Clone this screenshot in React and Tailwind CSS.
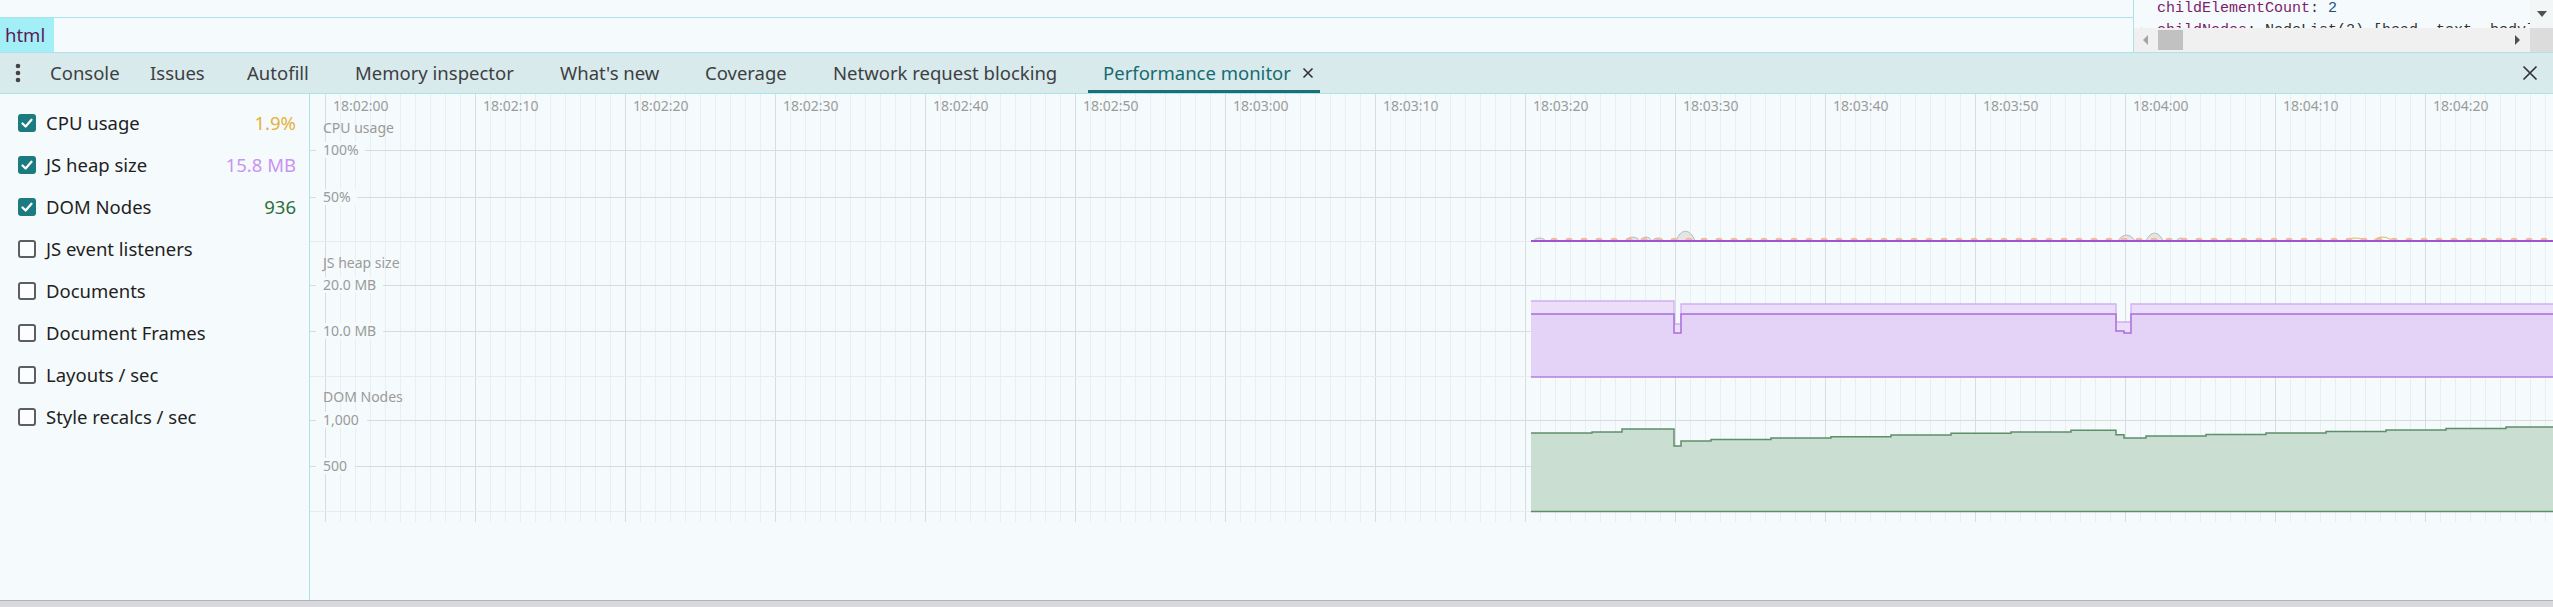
import React from "react";

const END = 2553;
const X = (px) => px - 310;
const Y = (py) => py - 94;

const TABS = [
  { label: "Console", w: "w-[100px]" },
  { label: "Issues", w: "w-[97px]" },
  { label: "Autofill", w: "w-[108px]" },
  { label: "Memory inspector", w: "w-[205px]" },
  { label: "What's new", w: "w-[145px]" },
  { label: "Coverage", w: "w-[128px]" },
  { label: "Network request blocking", w: "w-[270px]" },
];

const METRICS = [
  { label: "CPU usage", value: "1.9%", color: "text-[#e6b03a]", checked: true },
  { label: "JS heap size", value: "15.8 MB", color: "text-[#c993f2]", checked: true },
  { label: "DOM Nodes", value: "936", color: "text-[#2f6f3a]", checked: true },
  { label: "JS event listeners" },
  { label: "Documents" },
  { label: "Document Frames" },
  { label: "Layouts / sec" },
  { label: "Style recalcs / sec" },
];

// page coords for the sampled series
const HEAP_TOTAL = [[1531, 301], [1674, 324], [1681, 304], [2116, 322], [2131, 304]];
const HEAP_USED = [[1531, 314], [1674, 333], [1681, 314], [2116, 331], [2124, 333], [2131, 314]];
const DOM_NODES = [
  [1531, 433], [1592, 432], [1622, 429], [1674, 446], [1681, 441], [1711, 439.5],
  [1771, 438], [1831, 436.7], [1891, 435], [1951, 433.3], [2011, 432], [2071, 430.3],
  [2116, 434.7], [2124, 438], [2146, 436], [2206, 434.5], [2266, 433], [2326, 431.5],
  [2386, 430], [2446, 428.5], [2506, 427],
];
const CPU_BUMPS = [
  [1533, 1546, 3, "gray"], [1625, 1640, 4, "gray"], [1640, 1652, 4, "gray"],
  [1652, 1664, 3, "gray"], [1676, 1695, 10, "gray"], [2118, 2135, 6, "gray"],
  [2146, 2163, 8, "gray"], [2176, 2186, 3, "gray"], [2345, 2366, 3, "orange"],
  [2373, 2392, 4, "orange"],
];

function stepLine(pts) {
  let d = `M${X(pts[0][0])},${Y(pts[0][1])}`;
  for (let i = 1; i < pts.length; i++) {
    d += ` L${X(pts[i][0])},${Y(pts[i - 1][1])} L${X(pts[i][0])},${Y(pts[i][1])}`;
  }
  d += ` L${X(END)},${Y(pts[pts.length - 1][1])}`;
  return d;
}

function stepArea(pts, bottom) {
  return `M${X(pts[0][0])},${Y(bottom)} L${stepLine(pts).slice(1)} L${X(END)},${Y(bottom)} Z`;
}

function Checkbox({ checked }) {
  if (checked) {
    return (
      <span className="w-[18px] h-[18px] rounded-[3px] bg-[#1b7b80] flex items-center justify-center shrink-0">
        <svg width="14" height="14" viewBox="0 0 14 14">
          <polyline points="2.5,7.5 5.6,10.5 11.5,3.8" fill="none" stroke="#fff" strokeWidth="2.3" strokeLinecap="round" strokeLinejoin="round" />
        </svg>
      </span>
    );
  }
  return <span className="w-[18px] h-[18px] rounded-[3px] border-2 border-[#5b5f62] bg-[#fbfdfe] shrink-0" />;
}

function Chart() {
  const W = 2243;
  const H = 506;
  const minor = [];
  for (let x = 15; x < W; x += 15) minor.push(x);
  const major = [];
  for (let k = 0; k < 15; k++) major.push(15 + 150 * k);
  const ticks = [
    { y: 150, label: "100%", w: 36 },
    { y: 197, label: "50%", w: 28 },
    { y: 285, label: "20.0 MB", w: 54 },
    { y: 331, label: "10.0 MB", w: 54 },
    { y: 420, label: "1,000", w: 38 },
    { y: 466, label: "500", w: 26 },
  ];
  const dots = [];
  for (let x = 1554; x < END; x += 15) dots.push(x);

  return (
    <svg width={W} height={H} className="block">
      {minor.map((x) => (
        <line key={"m" + x} x1={x + 0.5} y1="0" x2={x + 0.5} y2={Y(522)} stroke="#e9eff1" strokeWidth="1" />
      ))}
      {major.map((x) => (
        <line key={"M" + x} x1={x + 0.5} y1="0" x2={x + 0.5} y2={Y(522)} stroke="#d8dddf" strokeWidth="1" />
      ))}
      {[241, 376, 511].map((y) => (
        <line key={"d" + y} x1="0" y1={Y(y) + 0.5} x2={W} y2={Y(y) + 0.5} stroke="#e6ecee" strokeWidth="1" />
      ))}
      {ticks.map((t) => (
        <g key={t.label}>
          <line x1="0" y1={Y(t.y) + 0.5} x2={W} y2={Y(t.y) + 0.5} stroke="#d9dcdd" strokeWidth="1" />
          <rect x="6" y={Y(t.y) - 8} width={t.w + 13} height="16" fill="#f5fafc" />
          <text x="13" y={Y(t.y) + 5} fontSize="14" fill="#9a9a9a">{t.label}</text>
        </g>
      ))}
      {major.map((x, k) => (
        <text key={"t" + x} x={x + 8} y={Y(106) + 5} fontSize="14" fill="#9a9a9a">
          {`18:0${2 + Math.floor(k / 6)}:${k % 6}0`}
        </text>
      ))}
      <text x="13" y={Y(128) + 5} fontSize="14" fill="#9a9a9a">CPU usage</text>
      <text x="13" y={Y(263) + 5} fontSize="14" fill="#9a9a9a">JS heap size</text>
      <text x="13" y={Y(397) + 5} fontSize="14" fill="#9a9a9a">DOM Nodes</text>

      {/* CPU */}
      {CPU_BUMPS.map(([a, b, h, c]) => (
        <path
          key={"b" + a}
          d={`M${X(a)},${Y(241)} C${X(a) + (b - a) * 0.25},${Y(241) - h * 1.3} ${X(a) + (b - a) * 0.75},${Y(241) - h * 1.3} ${X(b)},${Y(241)} Z`}
          fill={c === "gray" ? "#e4e4e4" : "none"}
          stroke={c === "gray" ? "#b9b9b9" : "#e8b54a"}
          strokeWidth="1"
        />
      ))}
      {dots.map((x) => (
        <ellipse key={"o" + x} cx={X(x)} cy={Y(240)} rx="3.5" ry="2.2" fill="#f1b9a2" />
      ))}
      <line x1={X(1531)} y1={Y(241)} x2={X(END)} y2={Y(241)} stroke="#9f55cf" strokeWidth="2" />

      {/* JS heap */}
      <path d={stepArea(HEAP_TOTAL, 377)} fill="#ecdefb" />
      <path d={stepLine(HEAP_TOTAL)} fill="none" stroke="#cfaef0" strokeWidth="1.3" />
      <path d={stepArea(HEAP_USED, 377)} fill="#e4d2f7" />
      <path d={stepLine(HEAP_USED)} fill="none" stroke="#a96ddb" strokeWidth="1.5" />
      <line x1={X(1531)} y1={Y(377)} x2={X(END)} y2={Y(377)} stroke="#b27ee0" strokeWidth="1.5" />

      {/* DOM nodes */}
      <path d={stepArea(DOM_NODES, 511)} fill="#cadfd2" />
      <path d={stepLine(DOM_NODES)} fill="none" stroke="#5d8f69" strokeWidth="1.5" />
      <line x1={X(1531)} y1={Y(511.5)} x2={X(END)} y2={Y(511.5)} stroke="#5d8f69" strokeWidth="1.5" />
    </svg>
  );
}

export default function App() {
  return (
    <div className="w-[2553px] h-[607px] overflow-hidden bg-[#f5fafc] font-['Noto_Sans',sans-serif] text-[#202124] flex flex-col">
      {/* top strip: breadcrumb + object viewer */}
      <div className="h-[53px] flex border-b border-[#abe3ea]">
        <div className="flex-1 flex flex-col">
          <div className="h-[18px] border-b border-[#abe3ea]" />
          <div className="h-[34px] flex">
            <div className="w-[54px] h-full bg-[#a3eff8] pl-[5px] flex items-center text-[18.5px] text-[#5e1a55]">html</div>
          </div>
        </div>
        <div className="w-[420px] border-l border-[#abe3ea] flex">
          <div className="w-[396px] flex flex-col">
            <div className="h-[28px] overflow-hidden font-['Liberation_Mono',monospace] text-[15px] leading-[22px] whitespace-nowrap">
              <div className="-mt-[2px] pl-[23px]">
                <div>
                  <span className="text-[#7d1b6b]">childElementCount</span>
                  <span className="text-[#333]">: </span>
                  <span className="text-[#1f4f8a]">2</span>
                </div>
                <div className="relative">
                  <span className="absolute -left-[16px] text-[10px] text-[#666]">▶</span>
                  <span className="text-[#7d1b6b]">childNodes</span>
                  <span className="text-[#333]">: NodeList(2) [head, text, body]</span>
                </div>
              </div>
            </div>
            <svg width="396" height="24" className="block">
              <rect width="396" height="24" fill="#f0f0f0" />
              <polygon points="14,7 14,17 9,12" fill="#a3a3a3" />
              <rect x="24" y="2" width="25" height="20" fill="#c1c1c1" />
              <polygon points="381,7 381,17 386,12" fill="#505050" />
            </svg>
          </div>
          <div className="w-[23px] flex flex-col">
            <div className="h-[28px] bg-[#f3f6f7] flex items-center justify-center">
              <svg width="10" height="6"><polygon points="0,0 10,0 5,6" fill="#505050" /></svg>
            </div>
            <div className="h-[24px] bg-[#dcdcdc]" />
          </div>
        </div>
      </div>

      {/* drawer tab bar */}
      <div className="h-[41px] bg-[#d9eaec] border-b border-[#abe3ea] flex items-stretch text-[18.5px] text-[#3c4043]">
        <div className="w-[35px] flex items-center justify-center">
          <svg width="6" height="20" viewBox="0 0 6 20">
            <circle cx="3" cy="3" r="2.3" fill="#444" />
            <circle cx="3" cy="10" r="2.3" fill="#444" />
            <circle cx="3" cy="17" r="2.3" fill="#444" />
          </svg>
        </div>
        {TABS.map((t) => (
          <div key={t.label} className={`${t.w} pl-[15px] flex items-center whitespace-nowrap`}>
            {t.label}
          </div>
        ))}
        <div className="w-[232px] pl-[15px] flex items-center whitespace-nowrap text-[#176a72] border-b-[3px] border-[#1b6f75]">
          <span className="pt-[3px]">Performance monitor</span>
          <svg width="12" height="12" viewBox="0 0 12 12" className="ml-[11px] mt-[3px]">
            <path d="M1.5 1.5 L10.5 10.5 M10.5 1.5 L1.5 10.5" stroke="#333" strokeWidth="1.6" />
          </svg>
        </div>
        <div className="ml-auto w-[46px] flex items-center justify-center">
          <svg width="16" height="16" viewBox="0 0 16 16">
            <path d="M1.5 1.5 L14.5 14.5 M14.5 1.5 L1.5 14.5" stroke="#333" strokeWidth="1.7" />
          </svg>
        </div>
      </div>

      {/* performance monitor body */}
      <div className="h-[506px] flex">
        <div className="w-[310px] border-r border-[#abe3ea] pt-[8px] pr-[13px] pl-[18px]">
          {METRICS.map((m) => (
            <div key={m.label} className="h-[42px] flex items-center">
              <Checkbox checked={m.checked} />
              <span className="ml-[10px] text-[18.5px] text-[#1f1f1f] whitespace-nowrap">{m.label}</span>
              {m.value && <span className={`ml-auto text-[18.5px] ${m.color}`}>{m.value}</span>}
            </div>
          ))}
        </div>
        <div className="flex-1 overflow-hidden">
          <Chart />
        </div>
      </div>

      <div className="h-[7px] bg-[#d8d9dd] border-t border-[#b3b3b3]" />
    </div>
  );
}
